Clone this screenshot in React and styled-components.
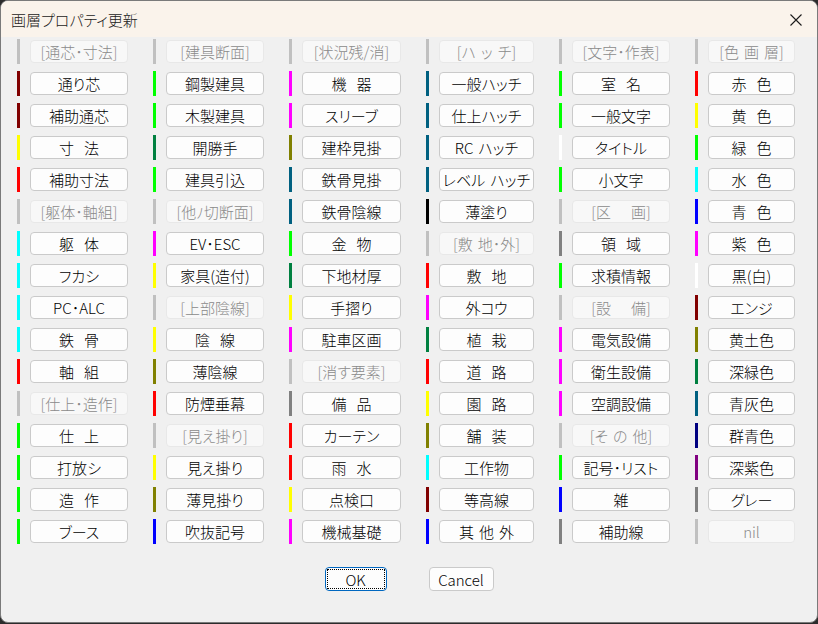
import React from 'react';
import styled, { createGlobalStyle } from 'styled-components';

const R = '#ff0000';
const Y = '#ffff00';
const G = '#00ff00';
const C = '#00ffff';
const B = '#0000ff';
const M = '#ff00ff';
const W = '#ffffff';
const K = '#000000';
const MR = '#800000';
const OL = '#808000';
const DG = '#008040';
const TL = '#006080';
const GR = '#808080';
const NV = '#000080';
const PU = '#800080';

// items without a colour are group headers (greyed out)
const COLUMNS = [
  {
    width: 136,
    button: 98,
    items: [
      ['[通芯･寸法]'], ['通り芯', MR], ['補助通芯', MR], ['寸  法', Y], ['補助寸法', R],
      ['[躯体･軸組]'], ['躯  体', C], ['フカシ', C], ['PC･ALC', C], ['鉄  骨', C],
      ['軸  組', R], ['[仕上･造作]'], ['仕  上', G], ['打放シ', G], ['造  作', G], ['ブース', G],
    ],
  },
  {
    width: 136,
    button: 98,
    items: [
      ['[建具断面]'], ['鋼製建具', G], ['木製建具', G], ['開勝手', DG], ['建具引込', G],
      ['[他ﾉ切断面]'], ['EV･ESC', M], ['家具(造付)', Y], ['[上部陰線]'], ['陰  線', Y],
      ['薄陰線', OL], ['防煙垂幕', R], ['[見え掛り]'], ['見え掛り', Y], ['薄見掛り', OL], ['吹抜記号', B],
    ],
  },
  {
    width: 137,
    button: 99,
    items: [
      ['[状況残/消]'], ['機  器', M], ['スリーブ', M], ['建枠見掛', OL], ['鉄骨見掛', TL],
      ['鉄骨陰線', TL], ['金  物', G], ['下地材厚', DG], ['手摺り', Y], ['駐車区画', M],
      ['[消す要素]'], ['備  品', GR], ['カーテン', R], ['雨  水', R], ['点検口', Y], ['機械基礎', M],
    ],
  },
  {
    width: 133,
    button: 95,
    items: [
      ['[ハ ッ チ]'], ['一般ハッチ', TL], ['仕上ハッチ', TL], ['RC ハッチ', TL], ['レベル ハッチ', TL],
      ['薄塗り', K], ['[敷 地･外]'], ['敷  地', R], ['外コウ', M], ['植  栽', DG],
      ['道  路', R], ['園  路', Y], ['舗  装', OL], ['工作物', C], ['等高線', MR], ['其 他 外', B],
    ],
  },
  {
    width: 136,
    button: 98,
    items: [
      ['[文字･作表]'], ['室  名', G], ['一般文字', G], ['タイトル', W], ['小文字', G],
      ['[区    画]'], ['領  域', GR], ['求積情報', G], ['[設    備]'], ['電気設備', M],
      ['衛生設備', M], ['空調設備', M], ['[そ の 他]'], ['記号･リスト', G], ['雑', B], ['補助線', GR],
    ],
  },
  {
    width: 110,
    button: 87,
    items: [
      ['[色 画 層]'], ['赤  色', R], ['黄  色', Y], ['緑  色', G], ['水  色', C],
      ['青  色', B], ['紫  色', M], ['黒(白)', W], ['エンジ', MR], ['黄土色', OL],
      ['深緑色', DG], ['青灰色', TL], ['群青色', NV], ['深紫色', PU], ['グレー', GR], ['nil'],
    ],
  },
];

const Label = ({ text }) =>
  text.split(/( +)/).map((part, i) =>
    part.startsWith(' ') ? <Space key={i} $n={part.length} /> : part
  );

export default function App() {
  return (
    <>
      <GlobalStyle />
      <Window>
        <TitleBar>
          <Title>画層プロパティ更新</Title>
          <CloseButton aria-label="close">
            <svg width="12" height="12" viewBox="0 0 12 12">
              <path d="M0.5 0.5 L11.5 11.5 M11.5 0.5 L0.5 11.5" stroke="#1c1c1c" strokeWidth="1.1" fill="none" />
            </svg>
          </CloseButton>
        </TitleBar>
        <Body>
          <Grid>
            {COLUMNS.map((col, ci) => (
              <Column key={ci} $w={col.width}>
                {col.items.map(([label, color], ri) => (
                  <Row key={ri}>
                    <Bar $color={color || '#c0c0c0'} />
                    <LayerButton $w={col.button} $header={!color}>
                      <Label text={label} />
                    </LayerButton>
                  </Row>
                ))}
              </Column>
            ))}
          </Grid>
          <Footer>
            <DialogButton $primary>OK</DialogButton>
            <DialogButton>Cancel</DialogButton>
          </Footer>
        </Body>
      </Window>
    </>
  );
}

const GlobalStyle = createGlobalStyle`
  html, body {
    margin: 0;
    background: #2c2c2c;
  }
  body {
    font-family: "Noto Sans CJK JP", "Noto Sans", sans-serif;
    font-weight: 300;
  }
`;

const Window = styled.div`
  width: 818px;
  height: 623px;
  box-sizing: border-box;
  display: flex;
  flex-direction: column;
  border: 1px solid #7a7a7a;
  border-radius: 8px;
  overflow: hidden;
  background: #f0f0f0;
`;

const TitleBar = styled.div`
  height: 36px;
  flex: none;
  display: flex;
  align-items: center;
  justify-content: space-between;
  background: #faf3eb;
`;

const Title = styled.div`
  padding-left: 10px;
  font-size: 15px;
  color: #1a1a1a;
  font-feature-settings: "palt";
  margin-top: 1px;
`;

const CloseButton = styled.div`
  width: 42px;
  height: 36px;
  display: flex;
  align-items: center;
  justify-content: center;
  margin-top: 2px;
`;

const Body = styled.div`
  flex: 1;
  display: flex;
  flex-direction: column;
`;

const Grid = styled.div`
  display: flex;
  padding: 2px 0 0 16px;
`;

const Column = styled.div`
  width: ${(p) => p.$w}px;
  flex: none;
  display: flex;
  flex-direction: column;
  gap: 7px;
`;

const Row = styled.div`
  height: 25px;
  display: flex;
  align-items: center;
`;

const Bar = styled.div`
  width: 3px;
  height: 25px;
  background: ${(p) => p.$color};
`;

const LayerButton = styled.div`
  width: ${(p) => p.$w}px;
  height: 23px;
  box-sizing: border-box;
  margin-left: 10px;
  display: flex;
  align-items: center;
  justify-content: center;
  border: 1px solid ${(p) => (p.$header ? '#e8e8e8' : '#cacaca')};
  border-radius: 4px;
  background: ${(p) => (p.$header ? '#f8f8f8' : '#fdfdfd')};
  color: ${(p) => (p.$header ? '#8a8a8a' : '#000')};
  font-size: 15px;
  font-feature-settings: "palt";
  white-space: nowrap;
`;

const Space = styled.span`
  display: inline-block;
  width: ${(p) => p.$n * 5}px;
`;

const Footer = styled.div`
  display: flex;
  justify-content: center;
  gap: 42px;
  padding-top: 23px;
`;

const DialogButton = styled.div`
  position: relative;
  width: ${(p) => (p.$primary ? 62 : 65)}px;
  height: 24px;
  box-sizing: border-box;
  display: flex;
  align-items: center;
  justify-content: center;
  border: 1px solid ${(p) => (p.$primary ? '#0067c0' : '#cacaca')};
  border-radius: 4px;
  background: #fdfdfd;
  color: #000;
  font-size: 15px;

  &::after {
    content: '';
    display: ${(p) => (p.$primary ? 'block' : 'none')};
    position: absolute;
    inset: 1px;
    border: 1px dotted #000;
  }
`;
